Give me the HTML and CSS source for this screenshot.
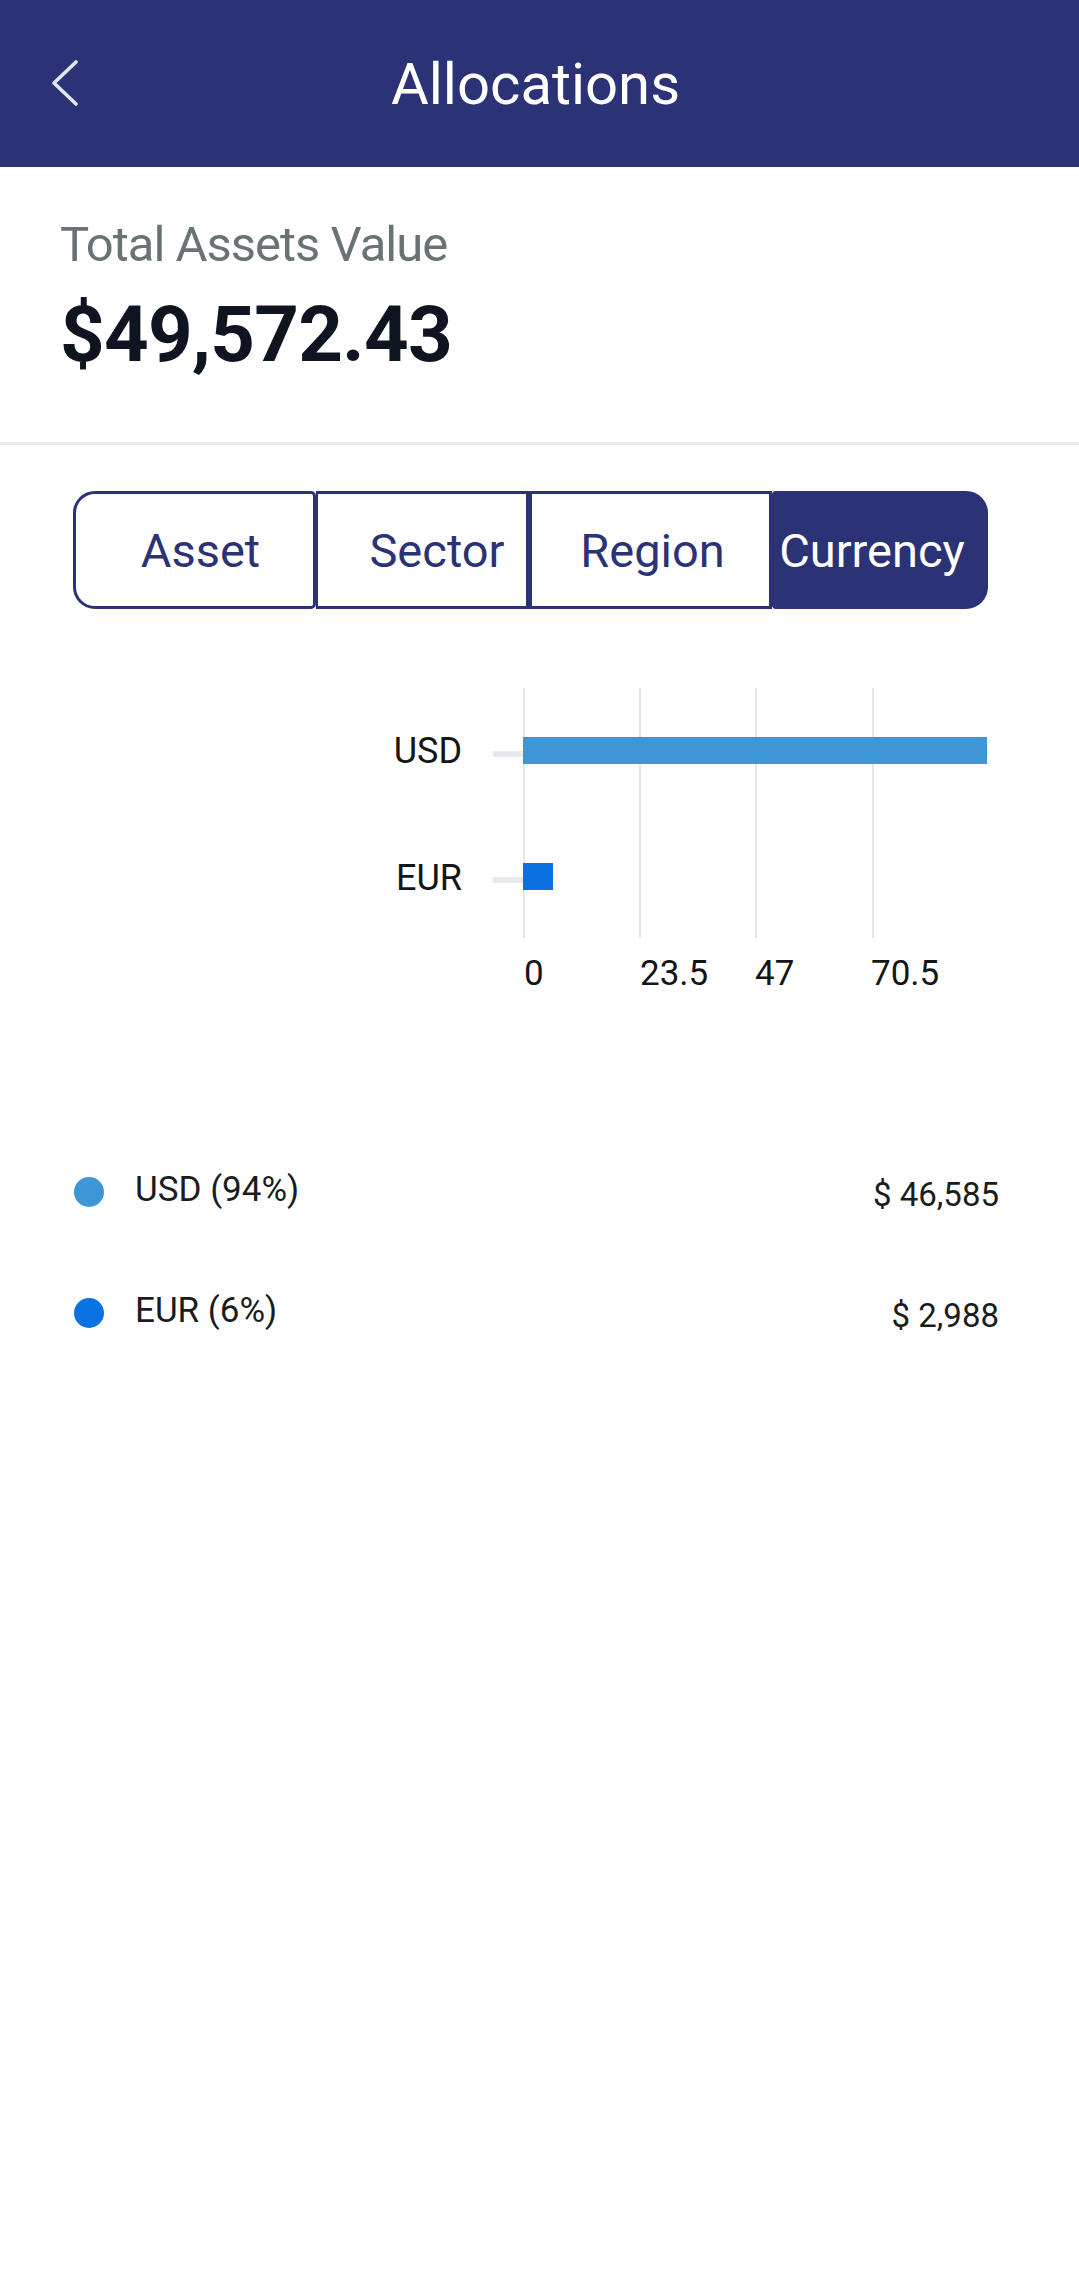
FILE: index.html
```html
<!DOCTYPE html>
<html lang="en">
<head>
<meta charset="utf-8">
<title>Allocations</title>
<link rel="stylesheet" href="styles.css">
</head>
<body>
<div class="app">
  <header class="topbar">
    <div class="topbar-left">
      <button class="back-btn" aria-label="Back">
        <svg class="back-icon" viewBox="0 0 30 48" width="30" height="48" aria-hidden="true">
          <path d="M26 3 L4 24 L26 45" fill="none" stroke="#e3e5f2" stroke-width="3.6" stroke-linecap="round" stroke-linejoin="round"/>
        </svg>
      </button>
    </div>
    <h1 class="topbar-title">Allocations</h1>
    <div class="topbar-right"></div>
  </header>

  <section class="summary">
    <div class="summary-label">Total Assets Value</div>
    <div class="summary-value">$49,572.43</div>
  </section>

  <nav class="segments">
    <button class="seg seg-asset">Asset</button>
    <button class="seg seg-sector">Sector</button>
    <button class="seg seg-region">Region</button>
    <button class="seg seg-currency is-active">Currency</button>
  </nav>

  <div class="chart-wrap">
    <svg class="chart" viewBox="0 0 1079 370" width="1079" height="370">
      <g class="grid">
        <line x1="524" y1="48" x2="524" y2="298"/>
        <line x1="640" y1="48" x2="640" y2="298"/>
        <line x1="756" y1="48" x2="756" y2="298"/>
        <line x1="873" y1="48" x2="873" y2="298"/>
      </g>
      <rect class="tick" x="493" y="111" width="30" height="6"/>
      <rect class="tick" x="493" y="237" width="30" height="6"/>
      <rect class="bar-usd" x="523" y="97" width="464" height="27"/>
      <rect class="bar-eur" x="523" y="223" width="30" height="27"/>
      <text class="cat" x="462" y="123" text-anchor="end">USD</text>
      <text class="cat" x="462" y="250" text-anchor="end">EUR</text>
      <text class="axis" x="524" y="345">0</text>
      <text class="axis" x="640" y="345">23.5</text>
      <text class="axis" x="755" y="345">47</text>
      <text class="axis" x="871" y="345">70.5</text>
    </svg>
  </div>

  <ul class="legend">
    <li class="legend-row">
      <span class="dot dot-usd"></span>
      <span class="legend-label">USD (94%)</span>
      <span class="legend-value">$ 46,585</span>
    </li>
    <li class="legend-row">
      <span class="dot dot-eur"></span>
      <span class="legend-label">EUR (6%)</span>
      <span class="legend-value">$ 2,988</span>
    </li>
  </ul>
</div>
</body>
</html>
```

FILE: styles.css
```css
* {
  box-sizing: border-box;
}

html, body {
  margin: 0;
  padding: 0;
  background: #ffffff;
}

body {
  font-family: Roboto, "Noto Sans", "Liberation Sans", sans-serif;
  color: #151a22;
  width: 1079px;
  min-height: 2291px;
}

.app {
  width: 1079px;
}

/* Header */
.topbar {
  height: 167px;
  background: #2b3275;
  display: grid;
  grid-template-columns: 1fr auto 1fr;
  align-items: center;
}

.topbar-left {
  padding-left: 50px;
  display: flex;
  align-items: center;
}

.back-btn {
  border: 0;
  padding: 0;
  margin: 0;
  background: transparent;
  display: flex;
  align-items: center;
  margin-top: -2px;
}

.back-icon {
  display: block;
}

.topbar-title {
  margin: 0;
  font-weight: 400;
  font-size: 58px;
  line-height: 1;
  color: #ffffff;
  letter-spacing: 0;
  transform: translateX(-4px);
}

/* Summary */
.summary {
  padding: 53px 0 68px 60px;
  border-bottom: 3px solid #e6eaee;
}

.summary-label {
  font-size: 49px;
  line-height: 1;
  color: #697375;
  letter-spacing: -1px;
}

.summary-value {
  margin-top: 27px;
  font-size: 78px;
  line-height: 1;
  font-weight: 700;
  color: #0e1520;
  letter-spacing: -0.8px;
}

/* Segmented control */
.segments {
  margin-top: 46px;
  padding-left: 73px;
  display: grid;
  grid-template-columns: 243px 213px 243px 216px;
  height: 118px;
}

.seg {
  height: 118px;
  border: 3px solid #2b3275;
  background: #ffffff;
  color: #2b3275;
  font-family: Roboto, "Noto Sans", sans-serif;
  font-size: 47px;
  line-height: 1;
  display: flex;
  align-items: center;
  justify-content: center;
  padding: 0;
  margin: 0;
  white-space: nowrap;
  overflow: visible;
}

.seg-asset {
  border-radius: 22px 5px 5px 22px;
  padding-left: 12px;
}

.seg-sector {
  border-radius: 0;
  padding-left: 30px;
  border-left-width: 2px;
}

.seg-region {
  border-radius: 0;
  padding-left: 4px;
}

.seg-currency {
  border-radius: 4px 22px 22px 4px;
  padding-right: 16px;
}

.seg.is-active {
  background: #2b3275;
  color: #ffffff;
}

/* Chart */
.chart-wrap {
  margin-top: 31px;
}

.chart {
  display: block;
}

.chart .grid line {
  stroke: #e2e7ee;
  stroke-width: 2;
}

.chart .tick {
  fill: #e6e9f0;
}

.chart .bar-usd {
  fill: #3d97d6;
}

.chart .bar-eur {
  fill: #0b70e1;
}

.chart text {
  font-family: Roboto, "Noto Sans", sans-serif;
  fill: #151515;
}

.chart .cat {
  font-size: 36px;
}

.chart .axis {
  font-size: 35px;
}

/* Legend */
.legend {
  list-style: none;
  margin: 121px 0 0 0;
  padding: 0 80px 0 74px;
}

.legend-row {
  height: 121px;
  display: flex;
  align-items: center;
}

.dot {
  width: 30px;
  height: 30px;
  border-radius: 50%;
  flex: 0 0 30px;
}

.dot-usd {
  background: #3d97d6;
}

.dot-eur {
  background: #0a72e2;
}

.legend-label {
  margin-left: 31px;
  font-size: 35px;
  line-height: 1;
  color: #1a1c20;
  margin-top: -5px;
}

.legend-value {
  margin-left: auto;
  font-size: 33px;
  line-height: 1;
  color: #1a1c20;
  margin-top: 5px;
}
```
